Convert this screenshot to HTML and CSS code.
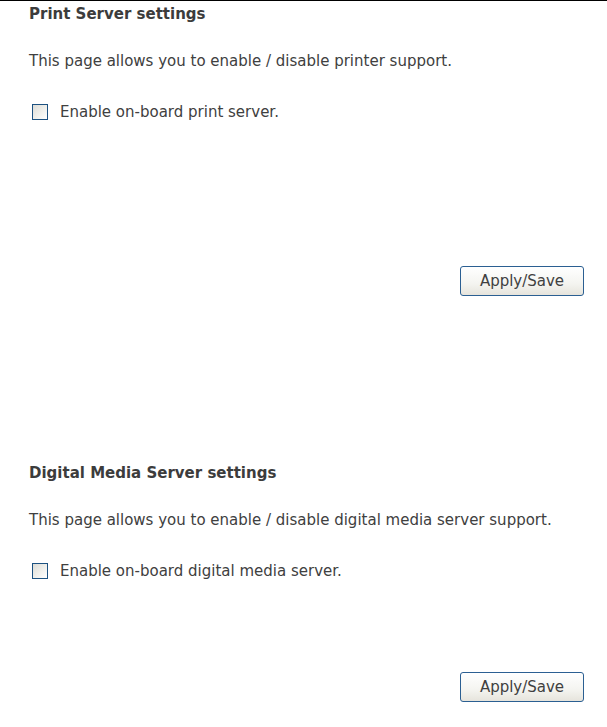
FILE: index.html
```html
<!DOCTYPE html>
<html>
<head>
<meta charset="utf-8">
<title>Settings</title>
<link rel="stylesheet" href="styles.css">
</head>
<body>
<div class="page">
  <section class="sec sec-print">
    <h2 class="title">Print Server settings</h2>
    <p class="desc">This page allows you to enable / disable printer support.</p>
    <label class="check"><input type="checkbox" class="box"><span>Enable on-board print server.</span></label>
    <div class="actions actions-print"><button class="btn">Apply/Save</button></div>
  </section>
  <section class="sec sec-media">
    <h2 class="title">Digital Media Server settings</h2>
    <p class="desc">This page allows you to enable / disable digital media server support.</p>
    <label class="check"><input type="checkbox" class="box"><span>Enable on-board digital media server.</span></label>
    <div class="actions actions-media"><button class="btn">Apply/Save</button></div>
  </section>
</div>
</body>
</html>
```
FILE: styles.css
```css
html, body {
  margin: 0;
  padding: 0;
  background: #fff;
}
body {
  font-family: "DejaVu Sans", Tahoma, "Liberation Sans", sans-serif;
  font-size: 15px;
  line-height: 18px;
  color: #404040;
}
.page {
  border-top: 1px solid #000;
  padding: 0 23px 0 29px;
}
.sec {
  display: flex;
  flex-direction: column;
}
.title {
  margin: 4px 0 0 0;
  font-size: 15px;
  line-height: 18px;
  font-weight: bold;
  color: #3c3c3c;
}
.desc {
  margin: 29px 0 0 0;
}
.check {
  margin-top: 33px;
  display: flex;
  align-items: center;
  height: 18px;
}
.box {
  appearance: none;
  -webkit-appearance: none;
  width: 16px;
  height: 16px;
  margin: 0 12px 0 3px;
  border: 1px solid #1d5281;
  background: linear-gradient(135deg, #dcdcd7 0%, #f0f0ec 55%, #ffffff 100%);
  box-sizing: border-box;
}
.actions {
  display: flex;
  justify-content: flex-end;
}
.actions-print { margin-top: 145px; }
.sec-media .title { margin-top: 168px; }
.actions-media { margin-top: 92px; }
.btn {
  width: 124px;
  height: 30px;
  border: 1px solid #2b5f92;
  border-radius: 3px;
  background: linear-gradient(#ffffff 0%, #f4f4f0 60%, #e6e4dc 100%);
  font-family: "DejaVu Sans", Tahoma, "Liberation Sans", sans-serif;
  font-size: 15px;
  color: #404040;
  padding: 0;
}
```
